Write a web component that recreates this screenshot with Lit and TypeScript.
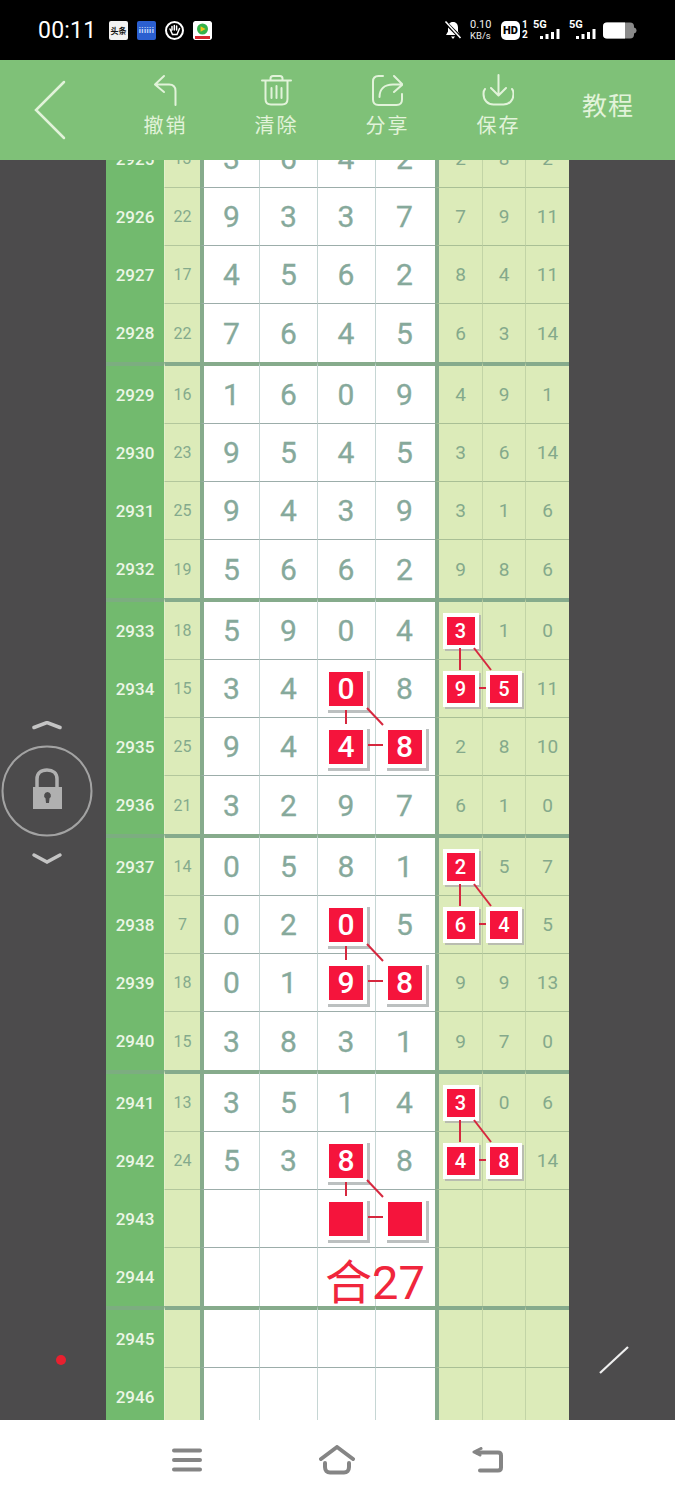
import { LitElement, html, css, svg } from "lit";
import { customElement } from "lit/decorators.js";

// [issue, sum, four draw digits, three derived digits]
const ROWS: [number, string, string, string][] = [
    [2925, "13", "3642", "2 8 2"],
    [2926, "22", "9337", "7 9 11"],
    [2927, "17", "4562", "8 4 11"],
    [2928, "22", "7645", "6 3 14"],
    [2929, "16", "1609", "4 9 1"],
    [2930, "23", "9545", "3 6 14"],
    [2931, "25", "9439", "3 1 6"],
    [2932, "19", "5662", "9 8 6"],
    [2933, "18", "5904", "3 1 0"],
    [2934, "15", "3408", "9 5 11"],
    [2935, "25", "9448", "2 8 10"],
    [2936, "21", "3297", "6 1 0"],
    [2937, "14", "0581", "2 5 7"],
    [2938, "7", "0205", "6 4 5"],
    [2939, "18", "0198", "9 9 13"],
    [2940, "15", "3831", "9 7 0"],
    [2941, "13", "3514", "3 0 6"],
    [2942, "24", "5388", "4 8 14"],
    [2943, "", "", ""],
    [2944, "", "", ""],
    [2945, "", "", ""],
    [2946, "", "", ""],
];

// marked cells, "issue:column" (0-3 main block, 4-6 right block)
const HITS = new Set([
    "2933:4", "2934:4", "2934:5",
    "2934:2", "2935:2", "2935:3",
    "2937:4", "2938:4", "2938:5",
    "2938:2", "2939:2", "2939:3",
    "2941:4", "2942:4", "2942:5",
    "2942:2", "2943:2", "2943:3",
]);

const TABLE_LEFT = 106;
const TABLE_TOP = 126;

const bigLinks = (x: number, y: number) => [
    [x, y + 22, x, y + 36],
    [x + 21, y + 20, x + 37, y + 37],
    [x + 22, y + 57, x + 37, y + 57],
];
const smallLinks = (x: number, y: number) => [
    [x, y + 18, x, y + 40],
    [x + 14, y + 18, x + 31, y + 40],
    [x + 19, y + 58, x + 26, y + 58],
];
const LINKS = [
    ...[688, 924, 1160].flatMap((y) => bigLinks(346, y)),
    ...[630, 866, 1102].flatMap((y) => smallLinks(460, y)),
];

@customElement("app-root")
export class AppRoot extends LitElement {
    private renderCell(issue: number, col: number, value: string) {
        const hit = HITS.has(`${issue}:${col}`);
        const cls = `cell c${col} ${col < 4 ? "main" : "side"}`;
        if (!hit) return html`<div class=${cls}>${value}</div>`;
        return html`<div class=${cls}><span class="mark">${value}</span></div>`;
    }

    private renderRow(row: [number, string, string, string]) {
        const [issue, sum, draw, derived] = row;
        const groupStart = (issue - 2929) % 4 === 0;
        const groupEnd = (issue - 2928) % 4 === 0;
        const digits = draw ? draw.split("") : ["", "", "", ""];
        const rest = derived ? derived.split(" ") : ["", "", ""];
        const cls = `row ${groupStart ? "start" : ""} ${groupEnd ? "end" : ""}`;
        return html`<div class=${cls}>
            <div class="cell id">${issue}</div>
            <div class="cell sum">${sum}</div>
            ${[...digits, ...rest].map((v, i) => this.renderCell(issue, i, v))}
        </div>`;
    }

    private renderStatus() {
        return html`<div class="status">
            <span class="time">00:11</span>
            <div class="apps">
                <span class="app news">头条</span>
                <span class="app blue">iiiiii</span>
                <svg class="app" viewBox="0 0 19 19">
                    <circle cx="9.5" cy="9.5" r="8.5" fill="#000" stroke="#fff" stroke-width="2" />
                    <path d="M5 8l2.5 5.5h4.5l2.5-6M7 9V5.5M9.3 9V4.5M11.6 9V5" fill="none" stroke="#fff" stroke-width="1.5" stroke-linecap="round" />
                </svg>
                <svg class="app" viewBox="0 0 19 19">
                    <rect width="19" height="19" rx="2" fill="#fff" />
                    <circle cx="9.5" cy="8" r="5.5" fill="#35b34a" />
                    <path d="M7.6 5.2l5 2.8-5 2.8z" fill="#f5c518" />
                    <rect x="2" y="15" width="15" height="3" fill="#d8282f" />
                </svg>
            </div>
            <div class="spacer"></div>
            <svg class="bell" viewBox="0 0 18 20">
                <path d="M9 2c-3.500 0-5 2.600-5 5.500v4L2 15h14l-2-3.500v-4C14 4.600 12.500 2 9 2zM7 16.500h4L9 19z" fill="#fff" />
                <path d="M1 2l16 16" stroke="#000" stroke-width="3.500" />
                <path d="M1.500 1.500l15 16.500" stroke="#fff" stroke-width="1.600" />
            </svg>
            <div class="speed"><span>0.10</span><span class="unit">KB/s</span></div>
            <span class="hd">HD</span>
            <div class="sim"><span>1</span><span>2</span></div>
            ${[0, 1].map(
                (i) => html`<div class="net ${i ? "second" : ""}">
                    <span>5G</span>
                    <svg viewBox="0 0 22 10" width="22" height="10">
                        <rect x="0" y="7" width="3" height="3" fill="#fff" />
                        <rect x="5.500" y="5" width="3" height="5" fill="#fff" />
                        <rect x="11" y="3" width="3" height="7" fill="#fff" />
                        <rect x="16.500" y="0" width="3" height="10" fill="#fff" />
                    </svg>
                </div>`
            )}
            <svg class="battery" viewBox="0 0 34 17">
                <rect width="31" height="16" y="0.500" rx="4" fill="#8a8a8a" />
                <path d="M4 .5h18v16H4a4 4 0 0 1-4-4v-8a4 4 0 0 1 4-4z" fill="#fff" />
                <path d="M31 5.500c1.600.4 2.500 1.400 2.500 3s-.9 2.600-2.500 3z" fill="#8a8a8a" />
            </svg>
        </div>`;
    }

    private renderNav() {
        return html`<div class="nav">
            <svg class="back" viewBox="0 0 32 60" width="32" height="60">
                <path d="M30 2L2 30l28 28" fill="none" stroke="#e2f3da" stroke-width="2.500" stroke-linecap="round" stroke-linejoin="miter" />
            </svg>
            <div class="tool undo">
                <svg viewBox="0 0 32 32" width="32" height="32">
                    <path d="M14 2L5 10.500 14 18M5.500 10.500H19c4.500 0 6.500 2.500 6.500 6.500v14" />
                </svg>
                <span>撤销</span>
            </div>
            <div class="tool clear">
                <svg viewBox="0 0 32 32" width="32" height="32">
                    <path d="M2 6.500h29M10.500 6V4.500C10.500 3 11.500 2 13 2h7c1.500 0 2.500 1 2.500 2.500V6M5.500 7v18c0 3.500 2 5.500 5.500 5.500h11c3.500 0 5.500-2 5.500-5.500V7M11.500 14v10M16.500 12v12M21.500 14v10" />
                </svg>
                <span>清除</span>
            </div>
            <div class="tool share">
                <svg viewBox="0 0 32 32" width="32" height="32">
                    <path d="M12 2H7.500C4 2 2 4 2 7.500v18C2 29 4 31 7.500 31h18c3.500 0 5.500-2 5.500-5.500V20M8.500 23c0-8 5-12.500 13.500-12.500h8M23 2l8.500 8.500L23 18" />
                </svg>
                <span>分享</span>
            </div>
            <div class="tool save">
                <svg viewBox="0 0 32 32" width="32" height="32">
                    <path d="M16.500 1v20M9 14l7.500 7.500L24 14M3 15c-1 1-1.500 3-1.500 5 0 6 4 10.500 10 10.500h10c6 0 10-4.500 10-10.500 0-2-.5-4-1.500-5" />
                </svg>
                <span>保存</span>
            </div>
            <span class="help">教程</span>
        </div>`;
    }

    private renderOverlays() {
        return html`<svg class="lock" viewBox="0 0 96 150" width="96" height="150">
                <path d="M34 6.500L47 1.500 60 6.500" fill="none" stroke="#c4c4c4" stroke-width="3.500" stroke-linecap="round" />
                <circle cx="47" cy="70" r="44.500" fill="none" stroke="#a3a3a3" stroke-width="2" />
                <path d="M37 66V58c0-6 4-9 10-9s10 3 10 9v8" fill="none" stroke="#b0b0b0" stroke-width="3.500" />
                <path fill-rule="evenodd" fill="#b0b0b0" d="M33 66h29v22H33zM47.500 71a3.500 3.500 0 0 0-2 6.300L46 82h3l.5-4.700a3.500 3.500 0 0 0-2-6.300z" />
                <path d="M34 134L47 141 60 134" fill="none" stroke="#c4c4c4" stroke-width="3.500" stroke-linecap="round" />
            </svg>
            <span class="dot"></span>
            <svg class="pen" viewBox="0 0 30 28" width="30" height="28">
                <path d="M1 27L29 1" stroke="#efefef" stroke-width="2.200" fill="none" />
            </svg>`;
    }

    protected render(): unknown {
        return html`
            ${this.renderStatus()} ${this.renderNav()}
            <div class="stage">
                <div class="table">
                    ${ROWS.map((r) => this.renderRow(r))}
                    <svg class="links" viewBox="0 0 463 1300" width="463" height="1300">
                        ${LINKS.map(
                            ([x1, y1, x2, y2]) =>
                                svg`<line x1=${x1 - TABLE_LEFT} y1=${y1 - TABLE_TOP} x2=${x2 - TABLE_LEFT} y2=${y2 - TABLE_TOP} />`
                        )}
                    </svg>
                    <span class="total">合27</span>
                </div>
                ${this.renderOverlays()}
            </div>
            <div class="softkeys">
                <svg viewBox="0 0 30 24" width="30" height="24">
                    <path d="M2 2.500h26M2 12h26M2 21.500h26" />
                </svg>
                <svg viewBox="0 0 36 30" width="36" height="30">
                    <path d="M2 14L18 2l16 12M6 18v4c0 3.500 2 5.500 5 5.500h14c3 0 5-2 5-5.500v-4" />
                </svg>
                <svg viewBox="0 0 32 26" width="32" height="26">
                    <path d="M5 5.500h21c2 0 3 1 3 3v12c0 2-1 3-3 3H8" />
                    <path d="M9 1.500L2 5l6 3" stroke-width="3" />
                </svg>
            </div>
        `;
    }

    static styles = css`
        :host {
            display: flex;
            flex-direction: column;
            width: 675px;
            height: 1500px;
            overflow: hidden;
            font-family: Roboto, "Noto Sans CJK SC", sans-serif;
            background: #4c4b4c;
        }

        /* status bar */
        .status {
            height: 60px;
            flex: none;
            background: #000;
            color: #fff;
            display: flex;
            align-items: center;
            padding: 0 38px 0 38px;
            box-sizing: border-box;
        }
        .time {
            font-size: 23px;
            width: 71px;
            letter-spacing: 0.2px;
        }
        .apps {
            display: flex;
            gap: 9px;
            align-items: center;
        }
        .app {
            width: 19px;
            height: 19px;
            display: flex;
            align-items: center;
            justify-content: center;
            overflow: hidden;
            font-size: 8px;
            font-weight: 700;
            white-space: nowrap;
            border-radius: 2px;
        }
        .news {
            background: #f2f2f2;
            color: #111;
        }
        .blue {
            background: #2b5fd0;
            color: #cfe0ff;
            letter-spacing: 0.5px;
        }
        .spacer {
            flex: 1;
        }
        .bell {
            width: 18px;
            height: 20px;
            margin-right: 8px;
        }
        .speed {
            display: flex;
            flex-direction: column;
            font-size: 11px;
            line-height: 11px;
            width: 31px;
            color: #eee;
        }
        .speed .unit {
            font-size: 9.500px;
        }
        .hd {
            width: 19px;
            height: 19px;
            background: #fff;
            color: #000;
            border-radius: 5px;
            font-size: 11px;
            font-weight: 900;
            display: flex;
            align-items: center;
            justify-content: center;
        }
        .sim {
            display: flex;
            flex-direction: column;
            font-size: 10px;
            line-height: 10px;
            font-weight: 700;
            width: 13px;
            padding-left: 2px;
            box-sizing: border-box;
        }
        .net {
            position: relative;
            width: 36px;
            height: 20px;
            font-size: 11px;
            line-height: 11px;
            font-weight: 700;
        }
        .net.second {
            width: 34px;
        }
        .net span {
            position: absolute;
            left: 0;
            top: -1px;
        }
        .net svg {
            position: absolute;
            left: 7px;
            top: 9px;
        }
        .battery {
            width: 34px;
            height: 17px;
        }

        /* toolbar */
        .nav {
            height: 100px;
            flex: none;
            background: #7fc178;
            color: #e2f3da;
            display: grid;
            grid-template-columns: 110px repeat(4, 111px) 1fr;
            align-items: center;
        }
        .back {
            margin-left: 34px;
        }
        .tool {
            display: flex;
            flex-direction: column;
            align-items: center;
            gap: 7px;
            font-size: 20px;
            line-height: 26px;
            letter-spacing: 2px;
            margin-bottom: 8px;
        }
        .tool svg {
            fill: none;
            stroke: #e2f3da;
            stroke-width: 2;
            stroke-linecap: round;
            stroke-linejoin: round;
        }
        .clear svg,
        .share svg,
        .save svg {
            margin-right: 2px;
        }
        .help {
            font-size: 25px;
            text-align: center;
            padding-right: 13px;
            margin-bottom: 12px;
            letter-spacing: 1px;
        }

        /* table */
        .stage {
            flex: 1;
            min-height: 0;
            overflow: hidden;
            position: relative;
        }
        .table {
            width: 463px;
            margin: -34px 0 0 106px;
            position: relative;
        }
        .row {
            display: grid;
            grid-template-columns: 58px 36px 60px 58px 58px 59px 48px 43px 43px;
            height: 58px;
        }
        .row.start {
            height: 62px;
        }
        .cell {
            box-sizing: border-box;
            display: flex;
            align-items: center;
            justify-content: center;
            border-bottom: 1px solid;
            border-right: 1px solid;
            position: relative;
        }
        .row.end .cell {
            border-bottom: none;
        }
        .row.start .cell {
            border-top: 4px solid #86ab8c;
        }
        .id {
            background: #72ba6e;
            color: #ecf6e6;
            font-size: 17px;
            font-weight: 500;
            border-bottom-color: #72ba6e;
            border-right: none;
        }
        .row.start .id {
            border-top-color: #7cad80;
        }
        .sum {
            background: #dcebb9;
            color: #84aa8c;
            font-size: 16px;
            border-bottom-color: #b3c79c;
            border-right: none;
            border-left: 1px solid #e4efcb;
        }
        .main {
            background: #fff;
            color: #86a99b;
            font-size: 30px;
            -webkit-text-stroke: 0.3px #86a99b;
            border-bottom-color: #9cadaa;
            border-right-color: #c6d6d4;
        }
        .side {
            background: #dcebb9;
            color: #84a98b;
            font-size: 19px;
            border-bottom-color: #a9bf95;
            border-right-color: #c2d4a6;
        }
        .c0,
        .c4 {
            border-left: 4px solid #86ab8c;
        }
        .c2 {
            padding-right: 1px;
        }
        .c3 {
            padding-right: 2px;
        }
        .c3,
        .c6 {
            border-right: none;
        }
        .mark {
            background: #f5143c;
            color: #fff;
            display: flex;
            align-items: center;
            justify-content: center;
            font-weight: 500;
            -webkit-text-stroke: 0;
            z-index: 1;
        }
        .main .mark {
            width: 34px;
            height: 34px;
            box-shadow: 0 0 0 4px #fff, 3px 3px 0 4px #bcc0c0;
        }
        .side .mark {
            width: 28px;
            height: 28px;
            font-size: 20px;
            box-shadow: 0 0 0 4px #fff, 2px 2px 0 4px #b9bdb0;
        }
        .links {
            position: absolute;
            left: 0;
            top: 0;
            z-index: 2;
            pointer-events: none;
        }
        .links line {
            stroke: #d6283f;
            stroke-width: 2;
        }
        .total {
            position: absolute;
            left: 219px;
            top: 1129px;
            z-index: 2;
            color: #f0263c;
            font-size: 47px;
            line-height: 56px;
            white-space: nowrap;
        }

        /* floating controls beside the table */
        .lock {
            position: absolute;
            left: 0;
            top: 561px;
        }
        .dot {
            position: absolute;
            left: 56px;
            top: 1195px;
            width: 10px;
            height: 10px;
            border-radius: 50%;
            background: #e8202f;
        }
        .pen {
            position: absolute;
            left: 599px;
            top: 1186px;
        }

        /* navigation keys */
        .softkeys {
            height: 80px;
            flex: none;
            background: #fff;
            display: flex;
            align-items: center;
            gap: 117px;
            padding-left: 172px;
        }
        .softkeys svg {
            fill: none;
            stroke: #858585;
            stroke-width: 4;
            stroke-linecap: round;
            stroke-linejoin: round;
        }
    `;
}
